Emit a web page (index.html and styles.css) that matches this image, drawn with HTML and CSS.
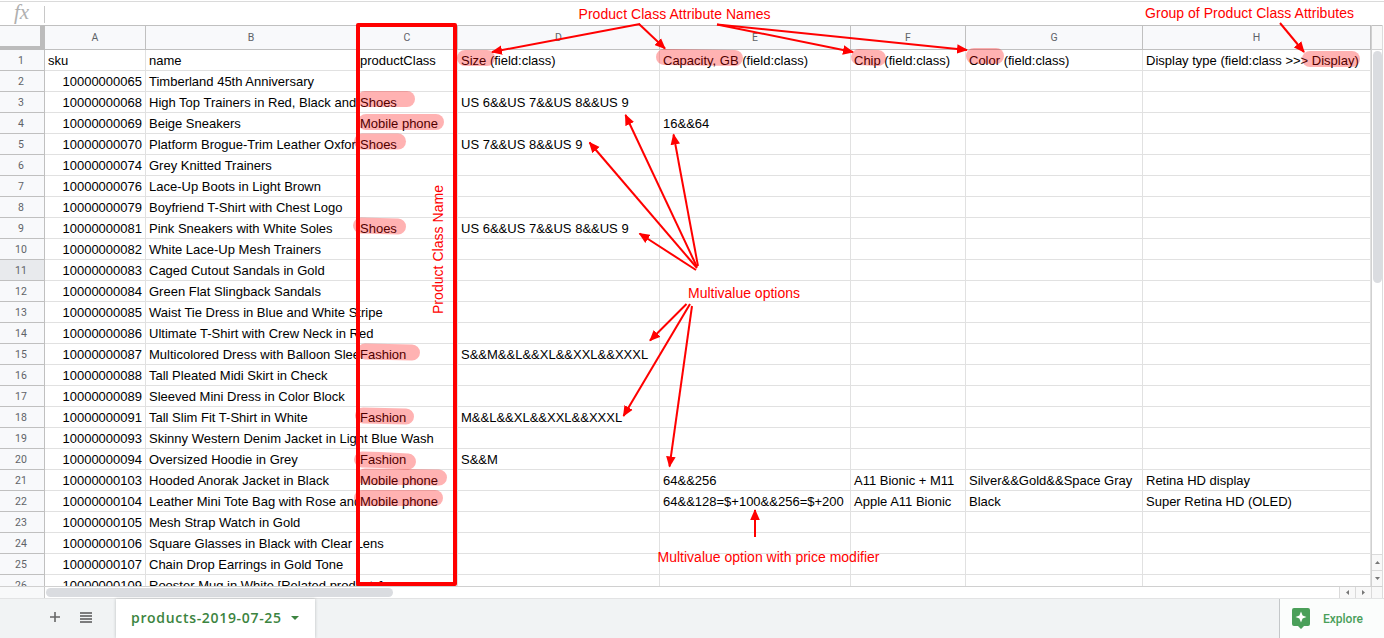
FILE: index.html
```
<!DOCTYPE html>
<html lang="en">
<head>
<meta charset="utf-8">
<title>products-2019-07-25</title>
<link rel="stylesheet" href="styles.css">
</head>
<body>
<div class="app">
<div class="formula-bar"><span class="fx">fx</span></div>
<div class="main">
<div class="viewport">
<table class="sheet">
<colgroup><col class="c-num"><col class="c-a"><col class="c-b"><col class="c-c"><col class="c-d"><col class="c-e"><col class="c-f"><col class="c-g"><col class="c-h"></colgroup>
<thead><tr><th class="corner"></th><th>A</th><th>B</th><th>C</th><th>D</th><th>E</th><th>F</th><th>G</th><th>H</th></tr></thead>
<tbody>
<tr><th>1</th><td class="txt">sku</td><td>name</td><td>productClass</td><td>Size (field:class)</td><td>Capacity, GB (field:class)</td><td>Chip (field:class)</td><td>Color (field:class)</td><td>Display type (field:class &gt;&gt;&gt; Display)</td></tr>
<tr><th>2</th><td>10000000065</td><td>Timberland 45th Anniversary</td><td></td><td></td><td></td><td></td><td></td><td></td></tr>
<tr><th>3</th><td>10000000068</td><td class="clip">High Top Trainers in Red, Black and</td><td>Shoes</td><td>US 6&amp;&amp;US 7&amp;&amp;US 8&amp;&amp;US 9</td><td></td><td></td><td></td><td></td></tr>
<tr><th>4</th><td>10000000069</td><td>Beige Sneakers</td><td>Mobile phone</td><td></td><td>16&amp;&amp;64</td><td></td><td></td><td></td></tr>
<tr><th>5</th><td>10000000070</td><td class="clip">Platform Brogue-Trim Leather Oxfor</td><td>Shoes</td><td>US 7&amp;&amp;US 8&amp;&amp;US 9</td><td></td><td></td><td></td><td></td></tr>
<tr><th>6</th><td>10000000074</td><td>Grey Knitted Trainers</td><td></td><td></td><td></td><td></td><td></td><td></td></tr>
<tr><th>7</th><td>10000000076</td><td>Lace-Up Boots in Light Brown</td><td></td><td></td><td></td><td></td><td></td><td></td></tr>
<tr><th>8</th><td>10000000079</td><td>Boyfriend T-Shirt with Chest Logo</td><td></td><td></td><td></td><td></td><td></td><td></td></tr>
<tr><th>9</th><td>10000000081</td><td>Pink Sneakers with White Soles</td><td>Shoes</td><td>US 6&amp;&amp;US 7&amp;&amp;US 8&amp;&amp;US 9</td><td></td><td></td><td></td><td></td></tr>
<tr><th>10</th><td>10000000082</td><td>White Lace-Up Mesh Trainers</td><td></td><td></td><td></td><td></td><td></td><td></td></tr>
<tr><th class="active">11</th><td>10000000083</td><td>Caged Cutout Sandals in Gold</td><td></td><td></td><td></td><td></td><td></td><td></td></tr>
<tr><th>12</th><td>10000000084</td><td>Green Flat Slingback Sandals</td><td></td><td></td><td></td><td></td><td></td><td></td></tr>
<tr><th>13</th><td>10000000085</td><td>Waist Tie Dress in Blue and White Stripe</td><td></td><td></td><td></td><td></td><td></td><td></td></tr>
<tr><th>14</th><td>10000000086</td><td>Ultimate T-Shirt with Crew Neck in Red</td><td></td><td></td><td></td><td></td><td></td><td></td></tr>
<tr><th>15</th><td>10000000087</td><td class="clip">Multicolored Dress with Balloon Slee</td><td>Fashion</td><td>S&amp;&amp;M&amp;&amp;L&amp;&amp;XL&amp;&amp;XXL&amp;&amp;XXXL</td><td></td><td></td><td></td><td></td></tr>
<tr><th>16</th><td>10000000088</td><td>Tall Pleated Midi Skirt in Check</td><td></td><td></td><td></td><td></td><td></td><td></td></tr>
<tr><th>17</th><td>10000000089</td><td>Sleeved Mini Dress in Color Block</td><td></td><td></td><td></td><td></td><td></td><td></td></tr>
<tr><th>18</th><td>10000000091</td><td>Tall Slim Fit T-Shirt in White</td><td>Fashion</td><td>M&amp;&amp;L&amp;&amp;XL&amp;&amp;XXL&amp;&amp;XXXL</td><td></td><td></td><td></td><td></td></tr>
<tr><th>19</th><td>10000000093</td><td>Skinny Western Denim Jacket in Light Blue Wash</td><td></td><td></td><td></td><td></td><td></td><td></td></tr>
<tr><th>20</th><td>10000000094</td><td>Oversized Hoodie in Grey</td><td>Fashion</td><td>S&amp;&amp;M</td><td></td><td></td><td></td><td></td></tr>
<tr><th>21</th><td>10000000103</td><td>Hooded Anorak Jacket in Black</td><td>Mobile phone</td><td></td><td>64&amp;&amp;256</td><td>A11 Bionic + M11</td><td>Silver&amp;&amp;Gold&amp;&amp;Space Gray</td><td>Retina HD display</td></tr>
<tr><th>22</th><td>10000000104</td><td class="clip">Leather Mini Tote Bag with Rose and</td><td>Mobile phone</td><td></td><td>64&amp;&amp;128=$+100&amp;&amp;256=$+200</td><td>Apple A11 Bionic</td><td>Black</td><td>Super Retina HD (OLED)</td></tr>
<tr><th>23</th><td>10000000105</td><td>Mesh Strap Watch in Gold</td><td></td><td></td><td></td><td></td><td></td><td></td></tr>
<tr><th>24</th><td>10000000106</td><td>Square Glasses in Black with Clear Lens</td><td></td><td></td><td></td><td></td><td></td><td></td></tr>
<tr><th>25</th><td>10000000107</td><td>Chain Drop Earrings in Gold Tone</td><td></td><td></td><td></td><td></td><td></td><td></td></tr>
<tr><th>26</th><td>10000000109</td><td>Rooster Mug in White [Related products]</td><td></td><td></td><td></td><td></td><td></td><td></td></tr>
</tbody>
</table>
</div>
<div class="vscroll">
<div class="vhead"></div>
<div class="vtrack"><div class="vthumb"></div></div>
<div class="step"><svg width="5" height="3"><path d="M0 3L2.5 0 5 3z"/></svg></div>
<div class="step"><svg width="5" height="3"><path d="M0 0L2.5 3 5 0z"/></svg></div>
</div>
</div>
<div class="hscroll">
<div class="hhead"></div>
<div class="htrack"><div class="hthumb"></div></div>
<div class="hstep"><svg width="3" height="5"><path d="M3 0L0 2.5 3 5z"/></svg></div>
<div class="hstep"><svg width="3" height="5"><path d="M0 0L3 2.5 0 5z"/></svg></div>
<div class="hend"></div>
</div>
<div class="footer">
<div class="tools">
<svg width="10" height="10"><path d="M5 0v10M0 5h10" stroke="#666" stroke-width="1.6"/></svg>
<svg width="12" height="11"><path d="M0 1h12M0 4h12M0 7h12M0 10h12" stroke="#555" stroke-width="1.7"/></svg>
</div>
<div class="tab"><span>products-2019-07-25</span><svg width="8" height="4"><path d="M0 0h8L4 4z" fill="#3c8440"/></svg></div>
<div class="explore">
<svg width="18" height="21" viewBox="0 0 18 21"><path d="M2 0h14a2 2 0 0 1 2 2v14a2 2 0 0 1-2 2h-4l-3 3-3-3H2a2 2 0 0 1-2-2V2a2 2 0 0 1 2-2z" fill="#4a9f59"/><path d="M9 3.5l1.6 3.9L14.500 9l-3.900 1.600L9 14.500l-1.600-3.900L3.500 9l3.900-1.600z" fill="#fff"/></svg>
<span>Explore</span>
</div>
</div>
<svg class="notes" width="1384" height="638">
<defs><marker id="tip" markerUnits="userSpaceOnUse" markerWidth="12" markerHeight="10" refX="10" refY="5" orient="auto"><path d="M0 .2L11 5 0 9.800z" fill="#f00"/></marker></defs>
<g class="marks">
<path d="M465 58H487"/>
<path d="M664 57L735 58"/>
<path d="M859 57L878 58"/>
<path d="M974 56H996"/>
<path d="M1310 59H1352"/>
<path d="M365 99H407"/>
<path d="M366 122H436"/>
<path d="M362 141.500H398"/>
<path d="M361 225.500L398 226.500"/>
<path d="M365 351.500L412 352.500"/>
<path d="M363 415.500L406 416.500"/>
<path d="M362 459.500L380 460 408 461.500"/>
<path d="M365 476.500L439 477.500"/>
<path d="M362 498H435"/>
</g>
<rect class="frame" x="358" y="25" width="97" height="559"/>
<g class="arrows">
<path d="M640 24L492 52"/>
<path d="M639 24L665 48.500"/>
<path d="M717 24.500L853 52"/>
<path d="M717 24.500L967 50"/>
<path d="M1280 23L1304 52"/>
<path d="M696 270L639.500 233.500"/>
<path d="M697 268L589.500 142.500"/>
<path d="M697 267L625.500 115"/>
<path d="M698 266L673.500 134.500"/>
<path d="M686.500 304L650 340.500"/>
<path d="M690 304L623.500 416"/>
<path d="M692 306L669.500 466.500"/>
<path d="M755 537V510"/>
</g>
<g class="labels">
<text x="578.500" y="19" textLength="192">Product Class Attribute Names</text>
<text x="1145" y="18" textLength="209">Group of Product Class Attributes</text>
<text x="688" y="298" textLength="112">Multivalue options</text>
<text x="657.500" y="562" textLength="222">Multivalue option with price modifier</text>
<text transform="translate(443 314) rotate(-90)" textLength="129">Product Class Name</text>
</g>
</svg>
</div>
</body>
</html>
```
FILE: styles.css
```
* { box-sizing: border-box; }
body { margin: 0; font-family: "Liberation Sans", Arial, sans-serif; font-size: 13px; color: #000; background: #fff; }
.app { position: relative; width: 1384px; height: 638px; overflow: hidden; display: flex; flex-direction: column; }
.formula-bar { height: 25px; flex: none; padding: 5px 0 2px; border-top: 1px solid #fff; background: linear-gradient(#dadada, #dadada) 0 0 / 100% 1px no-repeat; }
.fx { display: block; width: 45px; height: 17px; padding-left: 14px; border-right: 1px solid #c8c8c8; font: italic 21px/12px "Liberation Serif", serif; color: #b0b0b0; }
.main { display: flex; height: 561px; flex: none; }
.viewport { width: 1371px; height: 561px; overflow: hidden; }
.sheet { table-layout: fixed; width: 1371px; border-collapse: separate; border-spacing: 0; }
.c-num { width: 45px; }
.c-a { width: 101px; }
.c-b { width: 211px; }
.c-c { width: 101px; }
.c-d { width: 202px; }
.c-e { width: 191px; }
.c-f { width: 115px; }
.c-g { width: 177px; }
.c-h { width: 228px; }
th { padding: 0; font: 10.5px/18px Roboto, sans-serif; color: #5f6368; background: #f8f9fb; border-right: 1px solid #c0c0c0; border-bottom: 1px solid #c0c0c0; text-align: center; }
thead th { height: 25px; line-height: 23px; border-top: 1px solid #c0c0c0; }
thead .corner { border-right: 5px solid #bcbcbc; border-bottom: 4px solid #bcbcbc; }
tbody th { height: 21px; padding: 2px 2px 0 0; }
tbody th.active { background: #e8eaed; }
td { height: 21px; padding: 1px 3px 0; line-height: 19px; white-space: nowrap; border-right: 1px solid #e1e1e1; border-bottom: 1px solid #e1e1e1; }
td:nth-child(2) { text-align: right; }
td.txt { text-align: left; }
td.clip { overflow: hidden; }
.vscroll { display: flex; flex-direction: column; width: 12px; border-left: 1px solid #d0d0d0; border-right: 1px solid #dcdcdc; }
.vhead { height: 25px; background: #f8f8f8; border-top: 1px solid #c0c0c0; border-bottom: 1px solid #d0d0d0; }
.vtrack { flex: 1; padding: 1px 0 0 1px; }
.vthumb { width: 9px; height: 232px; border-radius: 5px; background: #dadce0; }
.step { height: 16px; display: flex; align-items: center; justify-content: center; border-top: 1px solid #dadada; background: #f8f8f8; }
.step svg, .hstep svg { fill: #777; }
.hscroll { display: flex; flex: none; height: 12px; width: 1383px; border-top: 1px solid #d0d0d0; border-right: 1px solid #dcdcdc; }
.hhead { width: 45px; background: #f8f9fa; border-right: 1px solid #c8c8c8; }
.htrack { flex: 1; padding: 1px; }
.hthumb { width: 347px; height: 9px; border-radius: 5px; background: #dadce0; }
.hstep { width: 16px; display: flex; align-items: center; justify-content: center; border-left: 1px solid #dadada; background: #f8f8f8; }
.hend { width: 11px; border-left: 1px solid #dadada; background: #f8f8f8; }
.footer { display: flex; flex: 1; background: #f1f3f4; border-top: 1px solid #e2e3e4; }
.tools { display: flex; width: 116px; padding: 13px 0 0 50px; gap: 20px; }
.tab { display: flex; align-items: center; width: 199px; padding: 0 0 2px 15px; background: #fff; box-shadow: 0 0 3px rgba(60, 64, 67, .3); color: #3c8440; font: 600 14px/36px "Open Sans", sans-serif; gap: 9px; }
.tab span { width: 151px; letter-spacing: .68px; white-space: nowrap; }
.explore { display: flex; align-items: center; width: 105px; margin-left: auto; padding-left: 12px; gap: 13px; background: #fbfdfc; border-left: 1px solid #c4c7c9; color: #4a9f59; font: 500 12px Roboto, sans-serif; }
.notes { position: absolute; left: 0; top: 0; }
.marks path { fill: none; stroke: rgba(255, 0, 0, .3); stroke-width: 16; stroke-linecap: round; stroke-linejoin: round; }
.frame { fill: none; stroke: #f00; stroke-width: 4; stroke-linejoin: round; }
.arrows path { stroke: #f00; stroke-width: 2; marker-end: url(#tip); }
.arrows, .labels { fill: #f00; }
.labels text { font-size: 14px; }
```
